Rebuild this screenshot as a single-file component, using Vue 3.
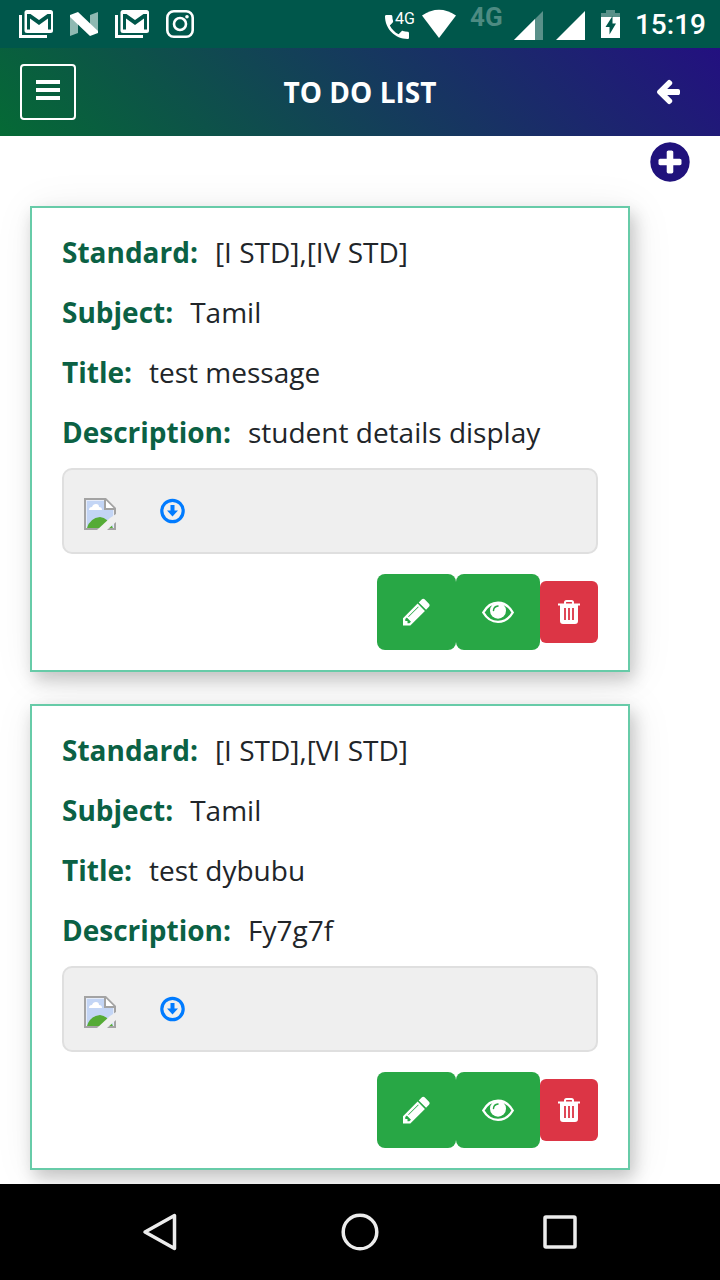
<script setup>
import { ref } from "vue";

const todos = ref([
  {
    id: 1,
    standard: "[I STD],[IV STD]",
    subject: "Tamil",
    title: "test message",
    description: "student details display",
  },
  {
    id: 2,
    standard: "[I STD],[VI STD]",
    subject: "Tamil",
    title: "test dybubu",
    description: "Fy7g7f",
  },
]);

function removeTodo(id) {
  todos.value = todos.value.filter((todo) => todo.id !== id);
}
</script>

<template>
  <div class="app">
    <div class="status-bar">
      <div class="notifications">
        <svg width="48" height="48" viewBox="0 0 48 48">
          <path d="M8.500 15V36.500H35" fill="none" stroke="#fff" stroke-width="3" />
          <rect x="12.500" y="10" width="28.500" height="23" rx="2.500" fill="#fff" />
          <path d="M15 14H18.500L27 20L35.500 14H39V29.500H36V18.500L27 25L18 18.500V29.500H15Z" fill="#00574b" />
        </svg>
        <svg width="48" height="48" viewBox="0 0 48 48">
          <path d="M10 15L18 20V33L10 36ZM38 12V32L30 27V15Z" fill="#8fb9b2" />
          <path d="M10 15L18 12L38 31L38 33L30 36L10 17Z" fill="#fff" />
        </svg>
        <svg width="48" height="48" viewBox="0 0 48 48">
          <path d="M8.500 15V36.500H35" fill="none" stroke="#fff" stroke-width="3" />
          <rect x="12.500" y="10" width="28.500" height="23" rx="2.500" fill="#fff" />
          <path d="M15 14H18.500L27 20L35.500 14H39V29.500H36V18.500L27 25L18 18.500V29.500H15Z" fill="#00574b" />
        </svg>
        <svg width="48" height="48" viewBox="0 0 48 48">
          <rect x="11.300" y="11.300" width="25.400" height="25.400" rx="6.500" fill="none" stroke="#fff" stroke-width="2.600" />
          <circle cx="24" cy="24" r="6" fill="none" stroke="#fff" stroke-width="2.600" />
          <circle cx="31" cy="16.800" r="1.800" fill="#fff" />
        </svg>
      </div>
      <div class="system">
        <svg width="30" height="48" viewBox="0 0 30 48">
          <path
            transform="translate(0 11) scale(1.333)"
            fill="#fff"
            d="M6.620 10.790c1.440 2.830 3.760 5.140 6.590 6.590l2.200-2.200c.27-.27.67-.36 1.020-.24 1.120.37 2.330.57 3.570.57.55 0 1 .45 1 1V20c0 .55-.45 1-1 1-9.390 0-17-7.610-17-17 0-.55.45-1 1-1h3.500c.55 0 1 .45 1 1 0 1.250.2 2.450.57 3.570.11.35.03.74-.25 1.020l-2.200 2.200z"
          />
          <text class="call-type" x="14" y="24">4G</text>
        </svg>
        <svg width="38" height="48" viewBox="0 0 38 48">
          <path d="M1 15.500Q18 4 35 15.500L18 38Z" fill="#fff" />
        </svg>
        <svg width="34" height="48" viewBox="0 0 34 48">
          <text class="network" x="1" y="26">4G</text>
        </svg>
        <svg width="32" height="48" viewBox="0 0 32 48">
          <path d="M1 40H30V11Z" fill="#599089" />
          <path d="M1 40H22V19Z" fill="#fff" />
        </svg>
        <svg width="32" height="48" viewBox="0 0 32 48">
          <path d="M1 40H30V11Z" fill="#fff" />
        </svg>
        <svg width="28" height="48" viewBox="0 0 28 48">
          <path d="M4 18V13H9V10H18V13H23V18Z" fill="#599089" />
          <path d="M4 17H23V38H4Z" fill="#fff" />
          <path d="M15.500 16L8.500 27H12.500V34.500L19 23.500H15.500Z" fill="#00574b" />
        </svg>
        <span class="time">15:19</span>
      </div>
    </div>

    <header class="header">
      <button class="btn-menu" aria-label="Menu">
        <svg width="24" height="20" viewBox="0 0 24 20">
          <path d="M0 0H24V4H0ZM0 8H24V12H0ZM0 16H24V20H0Z" fill="#fff" />
        </svg>
      </button>
      <h1>TO DO LIST</h1>
      <button class="btn-back" aria-label="Back">
        <svg width="28" height="28" viewBox="0 0 1792 1792">
          <path
            fill="#fff"
            d="M1664 896v128q0 53-32.500 90.500t-84.500 37.500h-704l293 294q38 36 38 90t-38 90l-75 76q-37 37-90 37-52 0-91-37l-651-652q-37-37-37-90 0-52 37-91l651-650q38-38 91-38 52 0 90 38l75 74q38 38 38 91t-38 91l-293 293h704q52 0 84.500 37.500t32.500 90.500z"
          />
        </svg>
      </button>
    </header>

    <main class="content">
      <div class="toolbar">
        <button class="btn-add" aria-label="Add">
          <svg width="46" height="46" viewBox="0 0 1792 1792">
            <path
              fill="#20127c"
              d="M1344 960v-128q0-26-19-45t-45-19h-256v-256q0-26-19-45t-45-19h-128q-26 0-45 19t-19 45v256h-256q-26 0-45 19t-19 45v128q0 26 19 45t45 19h256v256q0 26 19 45t45 19h128q26 0 45-19t19-45v-256h256q26 0 45-19t19-45zm320-64q0 209-103 385.500t-279.500 279.500-385.500 103-385.500-103-279.500-279.500-103-385.500 103-385.500 279.500-279.500 385.500-103 385.500 103 279.500 279.500 103 385.500z"
            />
          </svg>
        </button>
      </div>

      <div class="cards">
        <article v-for="todo in todos" :key="todo.id" class="card">
          <p><strong>Standard:</strong><span>{{ todo.standard }}</span></p>
          <p><strong>Subject:</strong><span>{{ todo.subject }}</span></p>
          <p><strong>Title:</strong><span>{{ todo.title }}</span></p>
          <p><strong>Description:</strong><span>{{ todo.description }}</span></p>

          <div class="attachment">
            <svg width="32" height="32" viewBox="0 0 32 32">
              <path d="M0 0H22L32 10V32H0Z" fill="#a3a3a3" />
              <path d="M2 2H20V12H30V30H2Z" fill="#e6ecf9" />
              <path d="M3 3H20V12H29V29H3Z" fill="#c3d5f5" />
              <path d="M5 12Q5 9 8 9Q9 6 12 6Q15 6 15 9Q18 9 18 12Z" fill="#fff" />
              <path d="M3 30Q6 20 16 19Q24 20 29 30Z" fill="#55ab36" />
              <path d="M22 2.500V10H29.500Z" fill="#fff" />
              <path d="M32 16L26 20L13 32H23L32 24Z" fill="#efefef" />
            </svg>
            <a href="#" class="download" aria-label="Download">
              <svg width="26" height="26" viewBox="0 0 26 26">
                <circle cx="12.500" cy="13" r="10.700" fill="none" stroke="#007bff" stroke-width="3.200" />
                <path d="M10.500 7H14.500V12.500H18L12.500 18.500L7 12.500H10.500Z" fill="#007bff" />
              </svg>
            </a>
          </div>

          <div class="actions">
            <button class="btn btn-green" aria-label="Edit">
              <svg width="27" height="32" viewBox="128 0 1536 1792">
                <path
                  fill="#fff"
                  d="M491 1536l91-91-235-235-91 91v107h128v128h107zm523-928q0-22-22-22-10 0-17 7l-542 542q-7 7-7 17 0 22 22 22 10 0 17-7l542-542q7-7 7-17zm-54-192l416 416-832 832h-416v-416zm683 96q0 53-37 90l-166 166-416-416 166-165q36-38 90-38 53 0 91 38l235 234q37 39 37 91z"
                />
              </svg>
            </button>
            <button class="btn btn-green" aria-label="View">
              <svg width="32" height="32" viewBox="0 0 32 32">
                <path d="M1.300 16.500C8.500 3.500 23.500 3.500 30.700 16.500C23.500 29 8.500 29 1.300 16.500Z" fill="none" stroke="#fff" stroke-width="2.400" />
                <circle cx="16" cy="14.700" r="8" fill="#fff" />
                <path d="M11.500 14.500Q11.700 10.500 16 10" fill="none" stroke="#28a745" stroke-width="1.500" stroke-linecap="round" />
              </svg>
            </button>
            <button class="btn btn-red" aria-label="Delete" @click="removeTodo(todo.id)">
              <svg width="22" height="26" viewBox="0 0 22 26">
                <path d="M7 5V3.500Q7 2 8.500 2H13.500Q15 2 15 3.500V5" fill="none" stroke="#fff" stroke-width="2" />
                <path d="M0 4.500H22V6.500H20V22Q20 25 17 25H5Q2 25 2 22V6.500H0Z" fill="#fff" />
                <path d="M7 9V21M11 9V21M15 9V21" stroke="#dc3545" stroke-width="1.800" />
              </svg>
            </button>
          </div>
        </article>
      </div>
    </main>

    <nav class="nav-bar">
      <button aria-label="Back">
        <svg width="40" height="40" viewBox="0 0 40 40">
          <path d="M34.500 3.500V36.500L5 20Z" />
        </svg>
      </button>
      <button aria-label="Home">
        <svg width="40" height="40" viewBox="0 0 40 40">
          <circle cx="20" cy="20" r="16.800" />
        </svg>
      </button>
      <button aria-label="Recent apps">
        <svg width="40" height="40" viewBox="0 0 40 40">
          <rect x="5" y="5" width="30" height="30" rx="1" />
        </svg>
      </button>
    </nav>
  </div>
</template>

<style>
body {
  margin: 0;
  background: #fff;
}
</style>

<style scoped>
* {
  box-sizing: border-box;
  margin: 0;
  padding: 0;
}

.app {
  display: flex;
  flex-direction: column;
  min-height: 100vh;
  font-family: "Open Sans", sans-serif;
  font-size: 28px;
  color: #212529;
}

svg {
  display: block;
  flex-shrink: 0;
  overflow: visible;
}

button {
  display: flex;
  align-items: center;
  justify-content: center;
  border: none;
  background: none;
  cursor: pointer;
}

.status-bar {
  display: flex;
  justify-content: space-between;
  height: 48px;
  padding: 0 14px 0 12px;
  background: #00574b;
  font-family: Roboto, sans-serif;
  color: #fff;
}

.notifications {
  display: flex;
}

.system {
  display: flex;
  gap: 10px;
}

.call-type {
  font-size: 16px;
  fill: #fff;
}

.network {
  font-size: 26px;
  font-weight: 700;
  fill: #4d8b82;
}

.time {
  font-size: 28px;
  font-weight: 500;
  line-height: 50px;
}

.header {
  display: flex;
  align-items: center;
  justify-content: space-between;
  height: 88px;
  padding: 0 20px;
  background: linear-gradient(45deg, #056a35, #231080);
}

.header h1 {
  font-size: 28px;
  font-weight: 700;
  color: #fff;
}

.btn-menu {
  width: 56px;
  height: 56px;
  padding-bottom: 4px;
  border: 2px solid #fff;
  border-radius: 4px;
}

.btn-back {
  width: 56px;
  height: 56px;
  padding: 0 8px 2px 0;
}

.content {
  flex: 1;
  padding-bottom: 14px;
}

.toolbar {
  display: flex;
  justify-content: flex-end;
  height: 70px;
  padding: 3px 27px 0;
}

.btn-add {
  width: 46px;
  height: 46px;
}

.cards {
  display: flex;
  flex-direction: column;
  gap: 32px;
  margin: 0 90px 0 30px;
}

.card {
  padding: 14px 30px 20px;
  border: 2px solid #67cba8;
  background: #fff;
  box-shadow: 4px 8px 16px rgba(0, 0, 0, 0.2), 4px 4px 40px rgba(0, 0, 0, 0.08);
}

.card p {
  display: flex;
  gap: 17px;
  line-height: 60px;
}

.card strong {
  font-weight: 700;
  color: #0b6144;
}

.attachment {
  display: flex;
  align-items: flex-start;
  gap: 44px;
  margin: 6px 0 20px;
  padding: 28px 20px 22px;
  border: 2px solid #dfdfdf;
  border-radius: 10px;
  background: #efefef;
}

.actions {
  display: flex;
  align-items: center;
  justify-content: flex-end;
}

.btn {
  border-radius: 8px;
}

.btn-green {
  padding: 22px 26px;
  background: #28a745;
}

.btn-red {
  padding: 18px;
  border-radius: 6px;
  background: #dc3545;
}

.nav-bar {
  position: relative;
  display: flex;
  height: 96px;
  padding: 0 60px;
  background: #000;
}

.nav-bar button {
  flex: 1;
}

.nav-bar svg {
  fill: none;
  stroke: #ececec;
  stroke-width: 3.500px;
  stroke-linejoin: round;
}
</style>
